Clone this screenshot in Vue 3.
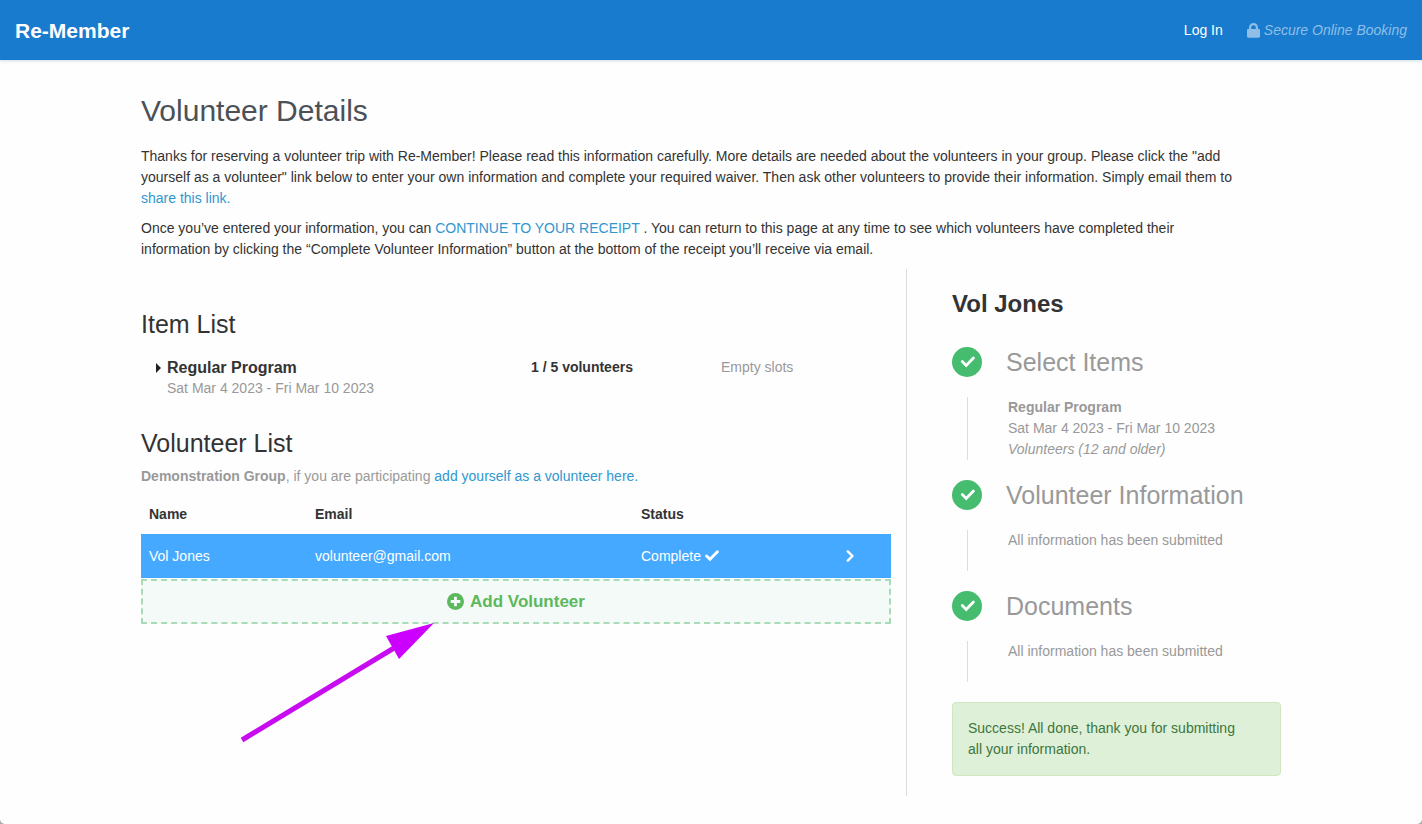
<template>
  <div class="page">
    <!-- Top bar -->
    <header class="navbar">
      <a href="#" class="brand">Re-Member</a>
      <nav class="nav-right">
        <a href="#" class="login">Log In</a>
        <span class="secure">
          <svg class="lock" viewBox="0 0 13 15" aria-hidden="true">
            <path
              fill="currentColor"
              fill-rule="evenodd"
              d="M2 6V4.500a4.500 4.500 0 0 1 9 0V6h.8c.7 0 1.200.5 1.200 1.200v6.300c0 .7-.5 1.200-1.200 1.200H1.200C.5 14.700 0 14.200 0 13.500V7.200C0 6.500.5 6 1.200 6H2zm2.200 0h4.600V4.500a2.300 2.300 0 0 0-4.600 0V6z"
            />
          </svg>
          <em>Secure Online Booking</em>
        </span>
      </nav>
    </header>

    <main class="container">
      <h1>Volunteer Details</h1>
      <p>
        Thanks for reserving a volunteer trip with Re-Member! Please read this information carefully. More details are
        needed about the volunteers in your group. Please click the "add<br />
        yourself as a volunteer" link below to enter your own information and complete your required waiver. Then ask
        other volunteers to provide their information. Simply email them to<br />
        <a href="#">share this link.</a>
      </p>
      <p>
        Once you’ve entered your information, you can <a href="#">CONTINUE TO YOUR RECEIPT</a> . You can return to this
        page at any time to see which volunteers have completed their<br />
        information by clicking the “Complete Volunteer Information” button at the bottom of the receipt you’ll receive
        via email.
      </p>

      <div class="row">
        <section class="col-main">
          <h2>Item List</h2>
          <div class="item">
            <div class="item-name">
              <button class="toggle" @click="itemOpen = !itemOpen">
                <span :class="['caret', { open: itemOpen }]"></span>Regular Program
              </button>
              <div class="item-dates">Sat Mar 4 2023 - Fri Mar 10 2023</div>
            </div>
            <strong class="item-count">1 / 5 volunteers</strong>
            <span class="item-slots">Empty slots</span>
          </div>

          <h2>Volunteer List</h2>
          <div class="hint">
            <strong>Demonstration Group</strong>, if you are participating
            <a href="#">add yourself as a volunteer here.</a>
          </div>

          <table>
            <thead>
              <tr>
                <th class="c-name">Name</th>
                <th class="c-email">Email</th>
                <th>Status</th>
                <th class="c-open"></th>
              </tr>
            </thead>
            <tbody>
              <tr v-for="v in volunteers" :key="v.email">
                <td>{{ v.name }}</td>
                <td>{{ v.email }}</td>
                <td>
                  {{ v.status }}
                  <svg class="done" viewBox="0 0 14 11" aria-hidden="true">
                    <path
                      fill="none"
                      stroke="currentColor"
                      stroke-width="2.800"
                      stroke-linecap="round"
                      d="M1.600 6l3.400 3.300L12.400 1.800"
                    />
                  </svg>
                </td>
                <td>
                  <svg class="chevron" viewBox="0 0 8 12" aria-hidden="true">
                    <path
                      fill="none"
                      stroke="currentColor"
                      stroke-width="2.400"
                      stroke-linecap="round"
                      d="M1.800 1.400L6.400 6l-4.600 4.600"
                    />
                  </svg>
                </td>
              </tr>
            </tbody>
          </table>

          <div class="add-wrap">
            <button class="add">
              <svg class="plus" viewBox="0 0 16 16" aria-hidden="true">
                <circle cx="8" cy="8" r="8" fill="currentColor" />
                <path stroke="#f4faf7" stroke-width="2.600" d="M8 3.500v9M3.500 8h9" />
              </svg>
              Add Volunteer
            </button>
            <svg class="arrow" viewBox="0 0 200 124" aria-hidden="true">
              <path fill="none" stroke="#c80cf0" stroke-width="5" d="M6 119L158 27" />
              <path fill="#cc00ff" d="M198 2L150 15L163 38z" />
            </svg>
          </div>
        </section>

        <aside class="col-side">
          <h3>Vol Jones</h3>
          <div v-for="step in steps" :key="step.title" class="step">
            <div class="step-head">
              <span class="badge">
                <svg viewBox="0 0 30 30" aria-hidden="true">
                  <path
                    fill="none"
                    stroke="#fff"
                    stroke-width="2.800"
                    stroke-linecap="round"
                    d="M10.300 14.600l3.900 3.800L21.400 11"
                  />
                </svg>
              </span>
              <h4>{{ step.title }}</h4>
            </div>
            <div class="step-body">
              <template v-if="step.item">
                <strong>{{ step.item }}</strong>
                <div>{{ step.text }}</div>
                <em>{{ step.note }}</em>
              </template>
              <template v-else>{{ step.text }}</template>
            </div>
          </div>
          <div class="alert" role="status">Success! All done, thank you for submitting all your information.</div>
        </aside>
      </div>
    </main>
  </div>
</template>

<script setup>
import { ref } from 'vue'

const itemOpen = ref(false)

const volunteers = [{ name: 'Vol Jones', email: 'volunteer@gmail.com', status: 'Complete' }]

const steps = [
  {
    title: 'Select Items',
    item: 'Regular Program',
    text: 'Sat Mar 4 2023 - Fri Mar 10 2023',
    note: 'Volunteers (12 and older)'
  },
  { title: 'Volunteer Information', text: 'All information has been submitted' },
  { title: 'Documents', text: 'All information has been submitted' }
]
</script>

<style>
html {
  background: #aaa;
}

body {
  margin: 0;
}
</style>

<style scoped>
.page {
  min-height: 100vh;
  background: #fefefe;
  border-radius: 0 0 5px 5px;
  font-family: 'Helvetica Neue', 'Liberation Sans', Arial, sans-serif;
  font-size: 14px;
  line-height: 21px;
  color: #333;
}

.page * {
  box-sizing: border-box;
}

a {
  color: #3097d1;
  text-decoration: none;
}

button {
  font: inherit;
  color: inherit;
  cursor: pointer;
}

/* === Navbar === */
.navbar {
  height: 60px;
  padding: 0 15px;
  display: flex;
  align-items: center;
  justify-content: space-between;
  background: #187bcd;
  box-shadow: 0 1px 3px rgba(0, 80, 120, 0.2);
}

.brand {
  font-size: 21px;
  font-weight: 700;
  color: #fff;
}

.nav-right {
  display: flex;
  gap: 24px;
}

.login {
  color: #fff;
}

.secure {
  display: flex;
  align-items: center;
  gap: 4px;
  color: #8fbfe8;
}

.lock {
  width: 13px;
  height: 15px;
}

/* === Content === */
.container {
  max-width: 1170px;
  margin: 0 auto;
  padding: 36px 15px 28px;
}

h1,
h2,
h3,
h4 {
  margin: 0;
  font-weight: 400;
}

h1 {
  margin-bottom: 20px;
  font-size: 30px;
  line-height: 30px;
  color: #4c5157;
}

p {
  margin: 0 0 9px;
}

.row {
  display: grid;
  grid-template-columns: 2fr 1fr;
  margin: 0 -15px;
}

.col-main {
  padding: 42px 15px 0;
}

h2,
h4 {
  font-size: 25px;
  line-height: 26px;
}

.item {
  display: grid;
  grid-template-columns: 52% 190px 1fr;
  padding: 20px 0 31px;
}

.item-name {
  padding-left: 15px;
}

.toggle {
  display: flex;
  align-items: center;
  padding: 0;
  border: 0;
  background: none;
  font-size: 16px;
  font-weight: 700;
}

.caret {
  margin-right: 6px;
  border: 5px solid transparent;
  border-right: 0;
  border-left-color: #222;
}

.caret.open {
  transform: rotate(90deg);
}

.item-dates {
  padding-left: 11px;
  color: #999;
}

.item-slots {
  color: #999;
}

.hint {
  margin: 10px 0 7px;
  color: #999;
}

/* === Volunteers table === */
table {
  width: 100%;
  border-collapse: collapse;
  table-layout: fixed;
}

th,
td {
  padding: 0 8px;
  text-align: left;
}

th {
  height: 40px;
}

td {
  height: 44px;
  background: #45aaff;
  color: #fff;
}

.c-name {
  width: 166px;
}

.c-email {
  width: 326px;
}

.c-open {
  width: 53px;
}

.done {
  width: 14px;
  height: 11px;
}

.chevron {
  display: block;
  width: 8px;
  height: 12px;
}

.add-wrap {
  position: relative;
  margin-top: 1px;
}

.add {
  display: flex;
  align-items: center;
  justify-content: center;
  gap: 6px;
  width: 100%;
  height: 45px;
  border: 2px dashed #a9dcb6;
  background: #f4faf7;
  font-size: 17px;
  font-weight: 700;
  color: #5cb85c;
}

.plus {
  width: 17px;
  height: 17px;
}

/* Pointer laid over the page, towards the add button */
.arrow {
  position: absolute;
  top: 42px;
  left: 95px;
  width: 200px;
  height: 124px;
  pointer-events: none;
}

/* === Progress === */
.col-side {
  padding: 22px 15px 20px 45px;
  border-left: 1px solid #ddd;
}

h3 {
  margin-bottom: 30px;
  font-size: 24px;
  line-height: 26px;
  font-weight: 700;
}

.step-head {
  display: flex;
  align-items: center;
  gap: 24px;
  color: #999;
}

.badge {
  width: 30px;
  height: 30px;
  border-radius: 50%;
  background: #45bc6e;
}

.badge svg {
  display: block;
}

.step-body {
  min-height: 41px;
  margin: 20px 0 20px 15px;
  padding-left: 40px;
  border-left: 1px solid #ddd;
  color: #999;
}

.step-body strong,
.step-body em {
  display: block;
}

.alert {
  padding: 15px 30px 15px 15px;
  border: 1px solid #d0e6c0;
  border-radius: 4px;
  background: #dff0d8;
  color: #3c763d;
}

@media (max-width: 900px) {
  .row {
    grid-template-columns: 1fr;
  }

  .col-side {
    padding-left: 15px;
    border-left: 0;
  }
}
</style>
